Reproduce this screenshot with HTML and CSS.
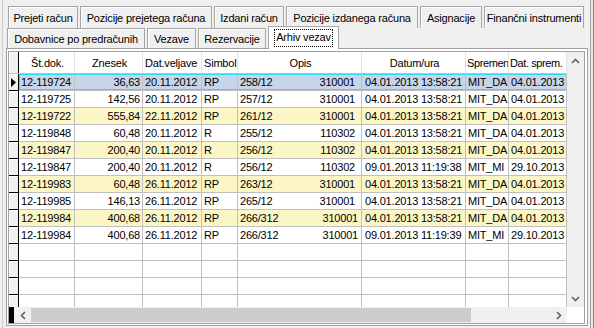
FILE: index.html
```html
<!DOCTYPE html>
<html lang="sl">
<head>
    <meta charset="UTF-8">
    <title>Arhiv vezav</title>
    <link rel="stylesheet" href="styles.css">
</head>
<body>
<div class="window">
    <div class="edge-left"><div class="line"></div></div>

    <div class="tabs">
        <div class="tabrow back">
            <div class="tab">Prejeti račun</div>
            <div class="tab">Pozicije prejetega računa</div>
            <div class="tab">Izdani račun</div>
            <div class="tab">Pozicije izdanega računa</div>
            <div class="tab">Asignacije</div>
            <div class="tab">Finančni instrumenti</div>
        </div>
        <div class="tabrow front">
            <div class="tab">Dobavnice po predračunih</div>
            <div class="tab">Vezave</div>
            <div class="tab">Rezervacije</div>
            <div class="tab active"><span class="focus">Arhiv vezav</span></div>
        </div>

        <div class="panel">
            <div class="grid">
                <div class="grid-main">
                    <div class="grid-view">
                        <div class="hdr">
                            <div class="rh"></div>
                            <div class="c c1">Št.dok.</div>
                            <div class="c c2">Znesek</div>
                            <div class="c c3 left">Dat.veljave</div>
                            <div class="c c4 left">Simbol</div>
                            <div class="c c5">Opis</div>
                            <div class="c c6">Datum/ura</div>
                            <div class="c c7 left tight">Spremen</div>
                            <div class="c c8 left tight">Dat. sprem.</div>
                        </div>

                        <div class="row sel">
                            <div class="rh"><svg width="6" height="9" viewBox="0 0 6 9"><polygon points="0,0 5,4.5 0,9" fill="#000"/></svg></div>
                            <div class="cells">
                                <div class="c c1">12-119724</div>
                                <div class="c c2 num">36,63</div>
                                <div class="c c3">20.11.2012</div>
                                <div class="c c4">RP</div>
                                <div class="c c5"><span>258/12</span><span>310001</span></div>
                                <div class="c c6">04.01.2013 13:58:21</div>
                                <div class="c c7">MIT_DA</div>
                                <div class="c c8">04.01.2013</div>
                            </div>
                        </div>
                        <div class="row">
                            <div class="rh"></div>
                            <div class="cells">
                                <div class="c c1">12-119725</div>
                                <div class="c c2 num">142,56</div>
                                <div class="c c3">20.11.2012</div>
                                <div class="c c4">RP</div>
                                <div class="c c5"><span>257/12</span><span>310001</span></div>
                                <div class="c c6">04.01.2013 13:58:21</div>
                                <div class="c c7">MIT_DA</div>
                                <div class="c c8">04.01.2013</div>
                            </div>
                        </div>
                        <div class="row alt">
                            <div class="rh"></div>
                            <div class="cells">
                                <div class="c c1">12-119722</div>
                                <div class="c c2 num">555,84</div>
                                <div class="c c3">22.11.2012</div>
                                <div class="c c4">RP</div>
                                <div class="c c5"><span>261/12</span><span>310001</span></div>
                                <div class="c c6">04.01.2013 13:58:21</div>
                                <div class="c c7">MIT_DA</div>
                                <div class="c c8">04.01.2013</div>
                            </div>
                        </div>
                        <div class="row">
                            <div class="rh"></div>
                            <div class="cells">
                                <div class="c c1">12-119848</div>
                                <div class="c c2 num">60,48</div>
                                <div class="c c3">20.11.2012</div>
                                <div class="c c4">R</div>
                                <div class="c c5"><span>255/12</span><span>110302</span></div>
                                <div class="c c6">04.01.2013 13:58:21</div>
                                <div class="c c7">MIT_DA</div>
                                <div class="c c8">04.01.2013</div>
                            </div>
                        </div>
                        <div class="row alt">
                            <div class="rh"></div>
                            <div class="cells">
                                <div class="c c1">12-119847</div>
                                <div class="c c2 num">200,40</div>
                                <div class="c c3">20.11.2012</div>
                                <div class="c c4">R</div>
                                <div class="c c5"><span>256/12</span><span>110302</span></div>
                                <div class="c c6">04.01.2013 13:58:21</div>
                                <div class="c c7">MIT_DA</div>
                                <div class="c c8">04.01.2013</div>
                            </div>
                        </div>
                        <div class="row">
                            <div class="rh"></div>
                            <div class="cells">
                                <div class="c c1">12-119847</div>
                                <div class="c c2 num">200,40</div>
                                <div class="c c3">20.11.2012</div>
                                <div class="c c4">R</div>
                                <div class="c c5"><span>256/12</span><span>110302</span></div>
                                <div class="c c6">09.01.2013 11:19:38</div>
                                <div class="c c7">MIT_MI</div>
                                <div class="c c8">29.10.2013</div>
                            </div>
                        </div>
                        <div class="row alt">
                            <div class="rh"></div>
                            <div class="cells">
                                <div class="c c1">12-119983</div>
                                <div class="c c2 num">60,48</div>
                                <div class="c c3">26.11.2012</div>
                                <div class="c c4">RP</div>
                                <div class="c c5"><span>263/12</span><span>310001</span></div>
                                <div class="c c6">04.01.2013 13:58:21</div>
                                <div class="c c7">MIT_DA</div>
                                <div class="c c8">04.01.2013</div>
                            </div>
                        </div>
                        <div class="row">
                            <div class="rh"></div>
                            <div class="cells">
                                <div class="c c1">12-119985</div>
                                <div class="c c2 num">146,13</div>
                                <div class="c c3">26.11.2012</div>
                                <div class="c c4">RP</div>
                                <div class="c c5"><span>265/12</span><span>310001</span></div>
                                <div class="c c6">04.01.2013 13:58:21</div>
                                <div class="c c7">MIT_DA</div>
                                <div class="c c8">04.01.2013</div>
                            </div>
                        </div>
                        <div class="row alt">
                            <div class="rh"></div>
                            <div class="cells">
                                <div class="c c1">12-119984</div>
                                <div class="c c2 num">400,68</div>
                                <div class="c c3">26.11.2012</div>
                                <div class="c c4">RP</div>
                                <div class="c c5 long"><span>266/312</span><span>310001</span></div>
                                <div class="c c6">04.01.2013 13:58:21</div>
                                <div class="c c7">MIT_DA</div>
                                <div class="c c8">04.01.2013</div>
                            </div>
                        </div>
                        <div class="row">
                            <div class="rh"></div>
                            <div class="cells">
                                <div class="c c1">12-119984</div>
                                <div class="c c2 num">400,68</div>
                                <div class="c c3">26.11.2012</div>
                                <div class="c c4">RP</div>
                                <div class="c c5 long"><span>266/312</span><span>310001</span></div>
                                <div class="c c6">09.01.2013 11:19:39</div>
                                <div class="c c7">MIT_MI</div>
                                <div class="c c8">29.10.2013</div>
                            </div>
                        </div>

                        <div class="row empty">
                            <div class="rh"></div>
                            <div class="cells">
                                <div class="c c1"></div><div class="c c2"></div><div class="c c3"></div><div class="c c4"></div>
                                <div class="c c5"></div><div class="c c6"></div><div class="c c7"></div><div class="c c8"></div>
                            </div>
                        </div>
                        <div class="row empty">
                            <div class="rh"></div>
                            <div class="cells">
                                <div class="c c1"></div><div class="c c2"></div><div class="c c3"></div><div class="c c4"></div>
                                <div class="c c5"></div><div class="c c6"></div><div class="c c7"></div><div class="c c8"></div>
                            </div>
                        </div>
                        <div class="row empty">
                            <div class="rh"></div>
                            <div class="cells">
                                <div class="c c1"></div><div class="c c2"></div><div class="c c3"></div><div class="c c4"></div>
                                <div class="c c5"></div><div class="c c6"></div><div class="c c7"></div><div class="c c8"></div>
                            </div>
                        </div>
                        <div class="row empty">
                            <div class="rh"></div>
                            <div class="cells">
                                <div class="c c1"></div><div class="c c2"></div><div class="c c3"></div><div class="c c4"></div>
                                <div class="c c5"></div><div class="c c6"></div><div class="c c7"></div><div class="c c8"></div>
                            </div>
                        </div>
                    </div>

                    <div class="vscroll">
                        <div class="arrow"><svg width="9" height="6" viewBox="0 0 9 6"><polyline points="1,5 4.5,1.5 8,5" fill="none" stroke="#606060" stroke-width="1.6"/></svg></div>
                        <div class="arrow"><svg width="9" height="6" viewBox="0 0 9 6"><polyline points="1,1 4.5,4.5 8,1" fill="none" stroke="#606060" stroke-width="1.6"/></svg></div>
                    </div>
                </div>

                <div class="hscroll-row">
                    <div class="hscroll">
                        <div class="hs-mark"></div>
                        <div class="arrow"><svg width="6" height="9" viewBox="0 0 6 9"><polyline points="5,1 1.5,4.5 5,8" fill="none" stroke="#606060" stroke-width="1.6"/></svg></div>
                        <div class="thumb"></div>
                        <div class="track"></div>
                        <div class="arrow"><svg width="6" height="9" viewBox="0 0 6 9"><polyline points="1,1 4.5,4.5 1,8" fill="none" stroke="#606060" stroke-width="1.6"/></svg></div>
                    </div>
                    <div class="corner"></div>
                </div>
            </div>
        </div>
    </div>

    <div class="edge-right"><div class="frame"></div></div>
</div>
</body>
</html>
```

FILE: styles.css
```css
* {
    box-sizing: border-box;
}
body {
    margin: 0;
    background: #f0f0f0;
    font-family: "Liberation Sans", Arial, sans-serif;
    font-size: 11px;
    letter-spacing: -0.2px;
    color: #000;
}
.window {
    display: flex;
    width: 594px;
    height: 328px;
    overflow: hidden;
}
.edge-left {
    width: 6px;
}
.edge-left .line {
    width: 3px;
    height: 100%;
    border-right: 1px solid #cdcdcd;
}
.edge-right {
    width: 6px;
    padding-left: 2px;
}
.edge-right .frame {
    height: 100%;
    border-left: 1px solid #a0a0a0;
    border-right: 1px solid #8a8a8a;
    background: #e6e6e6;
}

/* tabs */
.tabs {
    width: 582px;
    display: flex;
    flex-direction: column;
    padding-top: 6px;
}
.tabrow {
    display: flex;
    gap: 2px;
}
.tabrow.back {
    height: 22px;
    padding-left: 2px;
}
.tabrow.front {
    height: 20px;
    padding-left: 1px;
}
.tab {
    display: flex;
    align-items: center;
    justify-content: center;
    border: 1px solid #a5a5a5;
    border-bottom: none;
    background: #f0f0f0;
    box-shadow: inset 1px 1px 0 #fff;
    white-space: nowrap;
    padding-top: 1px;
}
.back .tab {
    height: 22px;
}
.back .tab:nth-child(1) { width: 70px; }
.back .tab:nth-child(2) { width: 132px; }
.back .tab:nth-child(3) { width: 70px; }
.back .tab:nth-child(4) { width: 132px; }
.back .tab:nth-child(5) { width: 62px; }
.back .tab:nth-child(6) { width: 100px; }
.front .tab {
    height: 20px;
}
.front .tab:nth-child(1) { width: 138px; }
.front .tab:nth-child(2) { width: 49px; }
.front .tab:nth-child(3) { width: 68px; }
.tab.active {
    width: 71px;
    height: 23px;
    margin-top: -2px;
    margin-bottom: -1px;
    background: #fff;
    box-shadow: none;
    position: relative;
    z-index: 1;
    padding-top: 0;
}
.focus {
    padding: 1px 1px 2px;
    outline: 1px dotted #000;
    outline-offset: 0;
    line-height: 13px;
}

/* panel + grid */
.panel {
    height: 278px;
    border: 1px solid #a0a0a0;
    background: #fff;
    padding: 2px 2px 1px 1px;
}
.grid {
    height: 273px;
    border: 1px solid #a0a0a0;
    display: flex;
    flex-direction: column;
    background: #fff;
}
.grid-main {
    flex: 1;
    display: flex;
    min-height: 0;
}
.grid-view {
    flex: 1;
    overflow: hidden;
}
.hdr, .row, .cells {
    display: flex;
}
.hdr {
    height: 22px;
    border-bottom: 1px solid #c0c0c0;
}
.hdr .c {
    justify-content: center;
    border-right: 1px solid #e3e3e3;
    padding-top: 1px;
}
.hdr .c.left {
    justify-content: flex-start;
    padding-left: 2px;
}
.hdr .c.tight {
    padding-left: 1px;
    letter-spacing: -0.4px;
}
.hdr .rh {
    height: 21px;
    border-bottom: none;
}
.rh {
    width: 10px;
    flex: none;
    height: 17px;
    background: #f0f0f0;
    border-right: 1px solid #000;
    border-bottom: 1px solid #000;
    box-shadow: inset 1px 1px 0 #fff;
    display: flex;
    align-items: center;
    padding-left: 2px;
}
.row .cells {
    height: 17px;
    border-bottom: 1px solid #c0c0c0;
    background: #fff;
}
.row.alt .cells {
    background: #fcf6c6;
}
.row.sel .cells {
    background: #c6d5e9;
    box-shadow: inset 0 0 0 1px #2fdced;
}
.c {
    flex: none;
    display: flex;
    align-items: center;
    overflow: hidden;
    white-space: nowrap;
    border-right: 1px solid #c0c0c0;
    padding-left: 2px;
}
.c.num {
    justify-content: flex-end;
    padding-left: 0;
    padding-right: 2px;
}
.row .c5 {
    justify-content: space-between;
    padding-right: 6px;
}
.row .c5.long {
    padding-right: 3px;
}
.row .c6 {
    padding-left: 3px;
}
.c1 { width: 56px; }
.c2 { width: 68px; }
.c3 { width: 59px; }
.c4 { width: 36px; }
.c5 { width: 124px; }
.c6 { width: 104px; }
.c7 { width: 43px; }
.c8 { width: 58px; }

/* scrollbars */
.vscroll {
    width: 17px;
    background: #f0f0f0;
    display: flex;
    flex-direction: column;
    justify-content: space-between;
}
.arrow {
    width: 17px;
    height: 17px;
    display: flex;
    align-items: center;
    justify-content: center;
}
.hscroll-row {
    height: 16px;
    display: flex;
}
.hscroll {
    flex: 1;
    display: flex;
    background: #f0f0f0;
}
.hscroll .arrow {
    height: 16px;
}
.hs-mark {
    width: 5px;
    background: #000;
}
.thumb {
    width: 440px;
    margin: 1px 0;
    background: #cdcdcd;
}
.track {
    flex: 1;
}
.corner {
    width: 17px;
    background: #fff;
}
```
